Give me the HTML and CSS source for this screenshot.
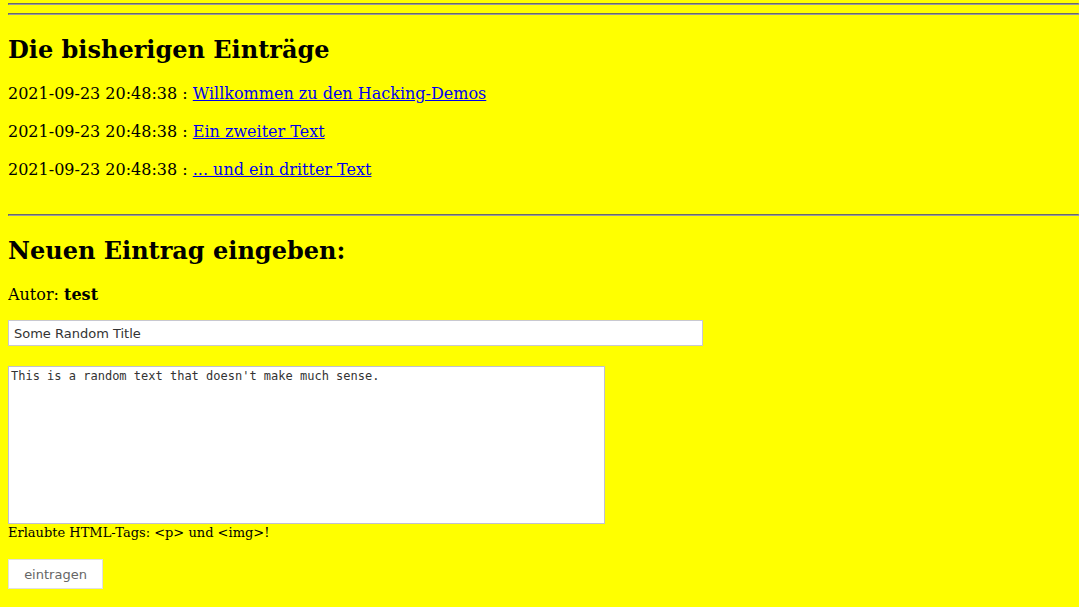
FILE: index.html
```
<!DOCTYPE html>
<html lang="de">
<head>
<meta charset="utf-8">
<title>Gästebuch</title>
<link rel="stylesheet" href="styles.css">
</head>
<body>
<hr class="rule">
<hr class="rule">
<h2 class="title title-first">Die bisherigen Einträge</h2>
<div class="entries">
<p class="entry">2021-09-23 20:48:38 : <a href="#">Willkommen zu den Hacking-Demos</a></p>
<p class="entry">2021-09-23 20:48:38 : <a href="#">Ein zweiter Text</a></p>
<p class="entry">2021-09-23 20:48:38 : <a href="#">... und ein dritter Text</a></p>
</div>
<hr class="rule">
<h2 class="title">Neuen Eintrag eingeben:</h2>
<form class="form">
<p class="author">Autor: <b>test</b></p>
<input class="field" type="text" value="Some Random Title">
<div class="area-wrap"><textarea class="area">This is a random text that doesn't make much sense.</textarea></div>
<div class="hint">Erlaubte HTML-Tags: &lt;p&gt; und &lt;img&gt;!</div>
<button class="submit" type="button">eintragen</button>
</form>
</body>
</html>
```
FILE: styles.css
```
html {
  background: #ffff00;
}
body {
  margin: 3px 0 0 8px;
  font-family: "DejaVu Serif", serif;
  font-size: 16px;
  color: #000;
}
.rule {
  margin: 8px 0;
  border-style: solid;
  border-width: 1px;
  border-top-color: #6a6a6a;
  border-left-color: #6a6a6a;
  border-right-color: #9a9a9a;
  border-bottom-color: #9a9a9a;
  height: 0;
}
.rule:first-child {
  margin-top: 0;
}
.title {
  font-size: 24px;
  font-weight: bold;
  margin: 20px 0;
}
.title-first {
  margin-bottom: 19px;
}
.entries {
  margin-bottom: 33px;
}
.entry {
  margin: 16px 0;
  line-height: 22px;
}
.entry a {
  color: #0000ee;
}
.author {
  margin: 16px 0 16px;
}
.field {
  display: block;
  box-sizing: border-box;
  width: 695px;
  height: 26px;
  padding: 0 5px;
  border: 1px solid #c8c8d0;
  background: #fff;
  font-family: "DejaVu Sans", sans-serif;
  font-size: 13px;
  color: #333;
  margin: 0;
}
.area-wrap {
  margin-top: 20px;
  line-height: 0;
}
.area {
  box-sizing: border-box;
  width: 597px;
  height: 158px;
  margin: 0;
  padding: 2px;
  border: 1px solid #c0c0d0;
  background: #fff;
  font-family: "DejaVu Sans Mono", monospace;
  font-size: 12px;
  line-height: 15px;
  color: #333;
  resize: none;
}
.hint {
  font-size: 13px;
  margin-top: 1px;
}
.submit {
  display: block;
  margin-top: 19px;
  box-sizing: border-box;
  width: 95px;
  height: 30px;
  padding: 0 15px;
  border: 1px solid #e0e0e0;
  background: #fff;
  font-family: "DejaVu Sans", sans-serif;
  font-size: 13px;
  color: #666;
}
```
